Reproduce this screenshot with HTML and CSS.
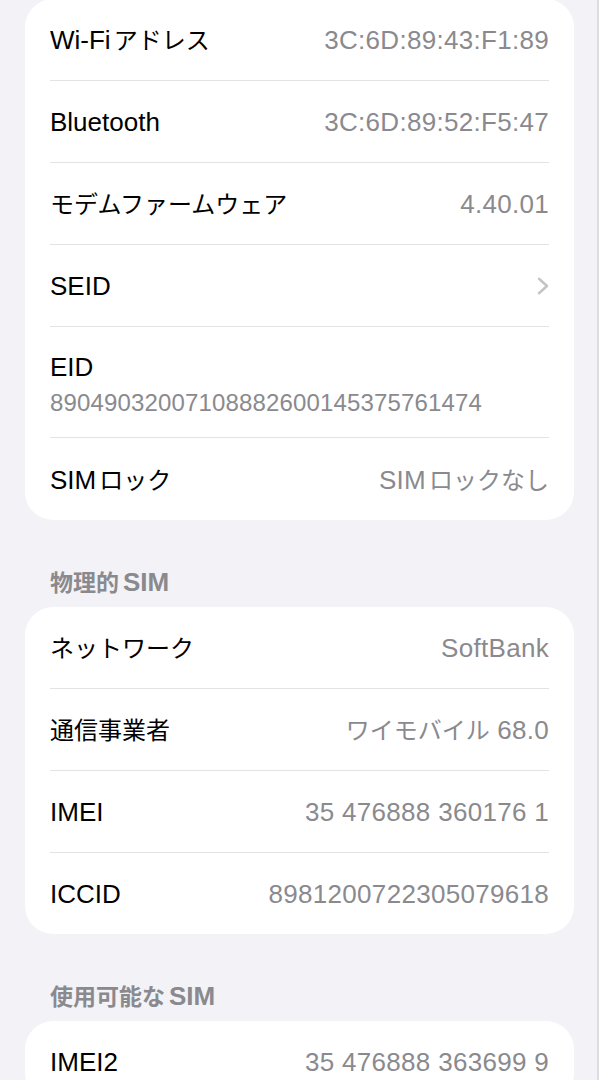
FILE: index.html
```html
<!DOCTYPE html>
<html lang="ja">
<head>
<meta charset="utf-8">
<title>情報</title>
<link rel="stylesheet" href="styles.css">
</head>
<body>
<main class="screen">
  <section class="card card-first">
    <div class="row"><span class="label">Wi-Fi<span class="ja ja-after">アドレス</span></span><span class="value">3C:6D:89:43:F1:89</span></div>
    <div class="row"><span class="label">Bluetooth</span><span class="value">3C:6D:89:52:F5:47</span></div>
    <div class="row"><span class="label"><span class="ja">モデムファームウェア</span></span><span class="value">4.40.01</span></div>
    <div class="row"><span class="label">SEID</span>
      <svg class="chevron" width="12" height="18" viewBox="0 0 12 18" aria-hidden="true"><path d="M2 1.8 L10 9 L2 16.2" fill="none" stroke="#c4c4c7" stroke-width="2.5" stroke-linecap="round" stroke-linejoin="round"/></svg>
    </div>
    <div class="row row-stack"><span class="label">EID</span><span class="value value-sub">89049032007108882600145375761474</span></div>
    <div class="row"><span class="label">SIM<span class="ja ja-after">ロック</span></span><span class="value">SIM<span class="ja ja-after">ロックなし</span></span></div>
  </section>

  <h2 class="section-title"><span class="ja ja-before">物理的</span>SIM</h2>
  <section class="card">
    <div class="row"><span class="label"><span class="ja">ネットワーク</span></span><span class="value">SoftBank</span></div>
    <div class="row"><span class="label"><span class="ja">通信事業者</span></span><span class="value"><span class="ja">ワイモバイル</span> 68.0</span></div>
    <div class="row"><span class="label">IMEI</span><span class="value">35 476888 360176 1</span></div>
    <div class="row"><span class="label">ICCID</span><span class="value">8981200722305079618</span></div>
  </section>

  <h2 class="section-title"><span class="ja ja-before">使用可能な</span>SIM</h2>
  <section class="card">
    <div class="row"><span class="label">IMEI2</span><span class="value">35 476888 363699 9</span></div>
  </section>
</main>
</body>
</html>
```

FILE: styles.css
```css
html, body {
  margin: 0;
  padding: 0;
}

body {
  background: #f2f2f7;
  min-height: 100vh;
  box-shadow: inset -2px 0 0 #dcdce1;
  font-family: "Liberation Sans", "Noto Sans CJK JP", sans-serif;
  color: #000;
  overflow: hidden;
}

.screen {
  padding: 0 25px;
}

.card {
  background: #fff;
  border-radius: 28px;
}

.card-first {
  margin-top: -1px;
}

.row {
  margin: 0 25px;
  height: 81px;
  display: flex;
  align-items: center;
  justify-content: space-between;
  border-bottom: 1px solid #e3e3e6;
}

.row:last-child {
  border-bottom: none;
}

.card-first .row:last-child {
  height: 82px;
}

.label {
  font-size: 26px;
  line-height: 30px;
  white-space: nowrap;
}

.value {
  font-size: 26px;
  line-height: 30px;
  color: #8a8a8e;
  letter-spacing: 0.3px;
  white-space: nowrap;
}

.ja {
  font-family: "Noto Sans CJK JP", sans-serif;
  font-size: 24px;
  letter-spacing: 0;
}

.ja-after {
  margin-left: 3px;
}

.ja-before {
  margin-right: 4px;
}

.row-stack {
  height: 111px;
  flex-direction: column;
  align-items: flex-start;
  justify-content: flex-start;
  padding-top: 25px;
  box-sizing: border-box;
  gap: 6px;
}

.value-sub {
  font-size: 24px;
  letter-spacing: 0.15px;
}

.chevron {
  display: block;
}

.section-title {
  margin: 0;
  padding: 48px 25px 12px;
  font-size: 26px;
  line-height: 26px;
  font-weight: 700;
  color: #8a8a8e;
}

.section-title .ja {
  font-size: 23px;
  font-weight: 700;
}
```
